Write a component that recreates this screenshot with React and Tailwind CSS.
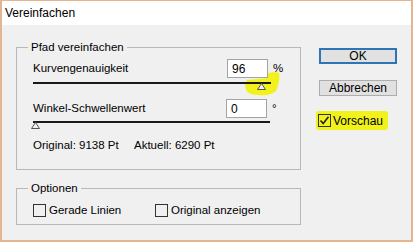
import React from 'react';

const font = { fontFamily: '"Liberation Sans", Arial, sans-serif' };

function Thumb({ className }) {
    return (
        <svg className={className} width="9" height="7" viewBox="0 0 9 7">
            <path d="M4.5 0.5 L8.5 6.5 L0.5 6.5 Z" fill="#f0f0f0" stroke="#555" strokeWidth="1" />
        </svg>
    );
}

function Checkbox({ checked }) {
    return (
        <div className="w-[13px] h-[13px] border border-[#333] flex items-center justify-center shrink-0">
            {checked && (
                <svg width="11" height="11" viewBox="0 0 11 11">
                    <path d="M1.5 5.5 L4.2 8.5 L9.5 1.8" fill="none" stroke="#222" strokeWidth="1.6" />
                </svg>
            )}
        </div>
    );
}

function NumberBox({ value }) {
    return (
        <div className="w-[41px] h-[19px] bg-white border border-[#a3a3a3] pl-[4px] flex items-center text-[12px] text-black relative z-10">
            {value}
        </div>
    );
}

export default function App() {
    return (
        <div className="w-[413px] h-[242px] bg-[#f0f0f0] border-x-2 border-b-2 border-t border-[#e3b590] flex flex-col text-black text-[11.5px]" style={font}>
            {/* title bar */}
            <div className="h-[24px] bg-white pl-[3px] flex items-center text-[12px]">Vereinfachen</div>

            <div className="flex flex-1">
                {/* left column */}
                <div className="pl-[14px] pt-[15px]">
                    <fieldset className="w-[285px] h-[130px] border border-[#b8b8b8]">
                        <legend className="ml-[11px] px-[3px] leading-[14px]">Pfad vereinfachen</legend>
                        <div className="pl-[16px]">
                            <div className="flex items-center mt-[5px]">
                                <div className="w-[194px]">Kurvengenauigkeit</div>
                                <NumberBox value="96" />
                                <div className="ml-[5px]">%</div>
                            </div>
                            <div className="relative w-[238px] h-[10px] mt-[3px]">
                                <svg className="absolute left-[212px] top-[-10px]" width="36" height="26" viewBox="0 0 36 26">
                                    <path d="M2 9 C8 8 18 8 22 7 L23 2 C28 1 32 1 34 2 C35 6 34 13 31 20 C26 24 20 25 14 24 C8 24 3 23 1 19 C0 15 0 12 2 9 Z" fill="#f1f21c" />
                                </svg>
                                <div className="absolute left-0 top-[1px] w-full h-[2px] bg-[#1a1a1a]" />
                                <Thumb className="absolute left-[224px] top-[2px]" />
                            </div>
                            <div className="flex items-center mt-[8px]">
                                <div className="w-[193px]">Winkel-Schwellenwert</div>
                                <NumberBox value="0" />
                                <div className="ml-[5px] self-start mt-[1px]">°</div>
                            </div>
                            <div className="relative w-[237px] h-[10px] mt-[2px]">
                                <div className="absolute left-0 top-[1px] w-full h-[2px] bg-[#1a1a1a]" />
                                <Thumb className="absolute left-[-2px] top-[2px]" />
                            </div>
                            <div className="flex mt-[8px] leading-[14px]">
                                <div className="w-[101px]">Original: 9138 Pt</div>
                                <div>Aktuell: 6290 Pt</div>
                            </div>
                        </div>
                    </fieldset>

                    <fieldset className="w-[285px] h-[44px] mt-[11px] border border-[#b8b8b8]">
                        <legend className="ml-[11px] px-[3px] leading-[14px]">Optionen</legend>
                        <div className="pl-[16px] mt-[7px] flex items-center">
                            <div className="w-[122px] flex items-center gap-[3px]">
                                <Checkbox />
                                <span>Gerade Linien</span>
                            </div>
                            <div className="flex items-center gap-[3px]">
                                <Checkbox />
                                <span>Original anzeigen</span>
                            </div>
                        </div>
                    </fieldset>
                </div>

                {/* right column */}
                <div className="ml-[18px] pt-[23px] flex flex-col">
                    <button className="w-[78px] h-[16px] bg-[#e1e1e1] border-2 border-[#2f74b5] flex items-center justify-center text-[12px] leading-none">OK</button>
                    <button className="w-[78px] h-[16px] mt-[16px] bg-[#e1e1e1] border border-[#adadad] flex items-center justify-center text-[12px] leading-none">Abbrechen</button>
                    <div className="mt-[15px] ml-[-3px] w-[72px] h-[19px] bg-[#f1f21c] rounded-[3px] flex items-center pl-[2px] gap-[2px]">
                        <Checkbox checked />
                        <span className="text-[12px]">Vorschau</span>
                    </div>
                </div>
            </div>
        </div>
    );
}
